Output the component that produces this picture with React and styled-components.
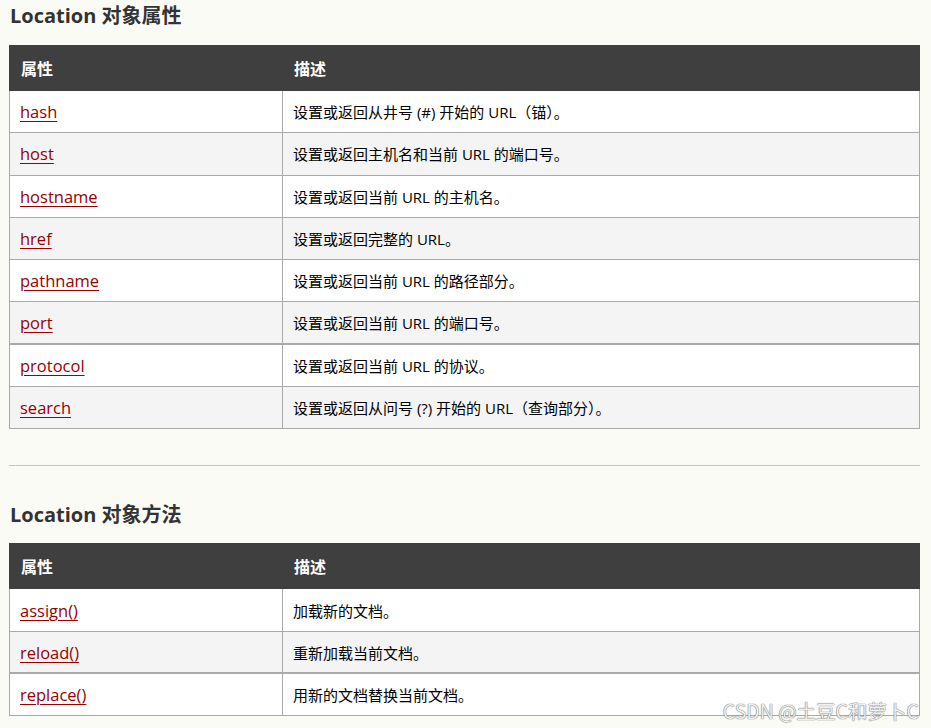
import styled, { createGlobalStyle } from "styled-components";

const GlobalStyle = createGlobalStyle`
  html, body {
    margin: 0;
    padding: 0;
    background: #fbfbf6;
  }
  body {
    font-family: "Open Sans", "Noto Sans CJK SC", sans-serif;
  }
`;

const Page = styled.div`
  position: relative;
  width: 931px;
  height: 728px;
  overflow: hidden;
  padding: 2px 11px 0 9px;
  box-sizing: border-box;
`;

const Title = styled.h2`
  margin: 0;
  padding-left: 1px;
  font-family: "Open Sans", "Noto Sans CJK SC", sans-serif;
  font-size: 20px;
  line-height: 28px;
  font-weight: 700;
  color: #333;
`;

const Table = styled.table`
  width: 911px;
  margin-top: ${(p) => p.$top}px;
  border-collapse: collapse;
  table-layout: fixed;
`;

const HeadCell = styled.th`
  height: 45px;
  padding: 0 11px;
  box-sizing: border-box;
  background: #3f3f3f;
  color: #fff;
  font-family: "Noto Sans CJK SC", sans-serif;
  font-size: 16px;
  font-weight: 700;
  text-align: left;
  border: 1px solid #3f3f3f;
  width: ${(p) => p.$w || "auto"};
`;

const Row = styled.tr`
  background: ${(p) => (p.$alt ? "#f4f4f4" : "#ffffff")};
`;

const Cell = styled.td`
  height: 42.3px;
  padding: 0 10px;
  box-sizing: border-box;
  border: 1px solid #aaaaaa;
  border-top-width: ${(p) => (p.$thick ? 2 : 1)}px;
  vertical-align: middle;
  color: #000;
  font-family: "Open Sans", "Noto Sans CJK SC", sans-serif;
  font-size: 15px;
`;

const Link = styled.a`
  color: #900;
  font-family: "Open Sans", sans-serif;
  font-size: 16.5px;
  text-decoration: underline;
  text-underline-offset: 3px;
  text-decoration-thickness: 1px;
`;

const Rule = styled.hr`
  margin: 36px 0 0 0;
  border: none;
  border-top: 1px solid #c4c4c4;
  width: 911px;
`;

const Title2 = styled(Title)`
  margin-top: 35px;
`;

const Watermark = styled.div`
  position: absolute;
  right: 12px;
  bottom: 3px;
  font-family: "Noto Sans CJK SC", sans-serif;
  font-size: 19.5px;
  color: #f0f0f0;
  text-shadow: 0 0 1px #666, 0 0 1px #666;
`;

const props = [
  ["hash", "设置或返回从井号 (#) 开始的 URL（锚）。"],
  ["host", "设置或返回主机名和当前 URL 的端口号。"],
  ["hostname", "设置或返回当前 URL 的主机名。"],
  ["href", "设置或返回完整的 URL。"],
  ["pathname", "设置或返回当前 URL 的路径部分。"],
  ["port", "设置或返回当前 URL 的端口号。"],
  ["protocol", "设置或返回当前 URL 的协议。", true],
  ["search", "设置或返回从问号 (?) 开始的 URL（查询部分）。"],
];

const methods = [
  ["assign()", "加载新的文档。"],
  ["reload()", "重新加载当前文档。"],
  ["replace()", "用新的文档替换当前文档。", true],
];

function RefTable({ rows, top }) {
  return (
    <Table $top={top}>
      <thead>
        <tr>
          <HeadCell $w="273px">属性</HeadCell>
          <HeadCell>描述</HeadCell>
        </tr>
      </thead>
      <tbody>
        {rows.map(([name, desc, thick], i) => (
          <Row key={name} $alt={i % 2 === 1}>
            <Cell $thick={thick}>
              <Link href="#">{name}</Link>
            </Cell>
            <Cell $thick={thick}>{desc}</Cell>
          </Row>
        ))}
      </tbody>
    </Table>
  );
}

export default function App() {
  return (
    <Page>
      <GlobalStyle />
      <Title>Location 对象属性</Title>
      <RefTable rows={props} top={15} />
      <Rule />
      <Title2>Location 对象方法</Title2>
      <RefTable rows={methods} top={14} />
      <Watermark>CSDN @土豆C和萝卜C</Watermark>
    </Page>
  );
}
